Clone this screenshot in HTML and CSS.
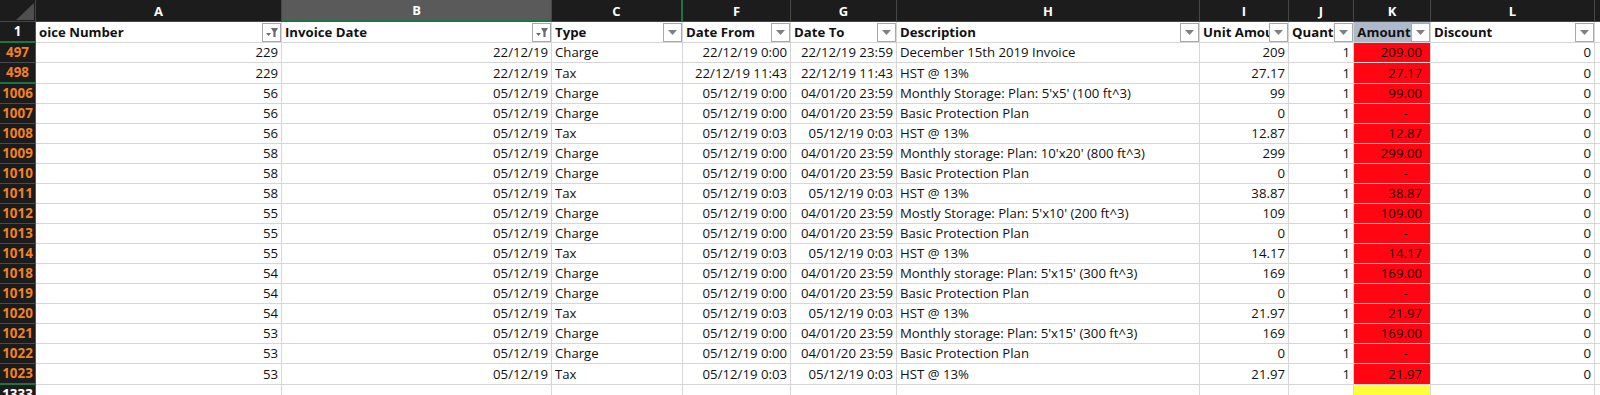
FILE: index.html
```html
<!doctype html>
<html>
 <head>
  <meta charset="utf-8">
  <title>Invoices</title>
  <link rel="stylesheet" href="styles.css">
 </head>
 <body>
  <table class="sheet">
   <colgroup>
    <col class="w-rh"><col class="w-a"><col class="w-b"><col class="w-c"><col class="w-f"><col class="w-g">
    <col class="w-h"><col class="w-i"><col class="w-j"><col class="w-k"><col class="w-l"><col class="w-m">
   </colgroup>
   <thead>
    <tr class="letters">
     <th class="corner"><svg width="22" height="19" viewBox="0 0 22 19"><polygon points="21,1 21,18 3,18" fill="#4f4f4f"/></svg></th>
     <th>A</th><th class="sel">B</th><th class="hidden-after">C</th><th>F</th><th>G</th>
     <th>H</th><th>I</th><th>J</th><th>K</th><th>L</th><th></th>
    </tr>
   </thead>
   <tbody>
    <tr class="fields">
     <th class="rh first mark">1</th>
     <td><div class="fh"><span class="lbl">oice Number</span><span class="flt on"><svg width="17" height="17" viewBox="0 0 17 17"><polygon points="3,9 8,9 5.5,12" fill="#6b6b6b"/><polygon points="8,4 15,4 12.6,8 12.6,13 10.4,13 10.4,8" fill="#6b6b6b"/></svg></span></div></td>
     <td><div class="fh"><span class="lbl">Invoice Date</span><span class="flt on"><svg width="17" height="17" viewBox="0 0 17 17"><polygon points="3,9 8,9 5.5,12" fill="#6b6b6b"/><polygon points="8,4 15,4 12.6,8 12.6,13 10.4,13 10.4,8" fill="#6b6b6b"/></svg></span></div></td>
     <td><div class="fh"><span class="lbl">Type</span><span class="flt"><svg width="17" height="17" viewBox="0 0 17 17"><polygon points="4,6 13,6 8.5,11" fill="#808080"/></svg></span></div></td>
     <td><div class="fh"><span class="lbl">Date From</span><span class="flt"><svg width="17" height="17" viewBox="0 0 17 17"><polygon points="4,6 13,6 8.5,11" fill="#808080"/></svg></span></div></td>
     <td><div class="fh"><span class="lbl">Date To</span><span class="flt"><svg width="17" height="17" viewBox="0 0 17 17"><polygon points="4,6 13,6 8.5,11" fill="#808080"/></svg></span></div></td>
     <td><div class="fh"><span class="lbl">Description</span><span class="flt"><svg width="17" height="17" viewBox="0 0 17 17"><polygon points="4,6 13,6 8.5,11" fill="#808080"/></svg></span></div></td>
     <td><div class="fh"><span class="lbl">Unit Amount</span><span class="flt"><svg width="17" height="17" viewBox="0 0 17 17"><polygon points="4,6 13,6 8.5,11" fill="#808080"/></svg></span></div></td>
     <td><div class="fh"><span class="lbl">Quantity</span><span class="flt"><svg width="17" height="17" viewBox="0 0 17 17"><polygon points="4,6 13,6 8.5,11" fill="#808080"/></svg></span></div></td>
     <td class="amt-head"><div class="fh"><span class="lbl">Amount</span><span class="flt"><svg width="17" height="17" viewBox="0 0 17 17"><polygon points="4,6 13,6 8.5,11" fill="#808080"/></svg></span></div></td>
     <td><div class="fh"><span class="lbl">Discount</span><span class="flt"><svg width="17" height="17" viewBox="0 0 17 17"><polygon points="4,6 13,6 8.5,11" fill="#808080"/></svg></span></div></td>
     <td></td>
    </tr>
    <tr><th class="rh">497</th><td class="n">229</td><td class="n">22/12/19</td><td>Charge</td><td class="n">22/12/19 0:00</td><td class="n">22/12/19 23:59</td><td>December 15th 2019 Invoice</td><td class="n">209</td><td class="n">1</td><td class="amt">209.00</td><td class="n">0</td><td></td></tr>
    <tr><th class="rh mark">498</th><td class="n">229</td><td class="n">22/12/19</td><td>Tax</td><td class="n">22/12/19 11:43</td><td class="n">22/12/19 11:43</td><td>HST @ 13%</td><td class="n">27.17</td><td class="n">1</td><td class="amt">27.17</td><td class="n">0</td><td></td></tr>
    <tr><th class="rh">1006</th><td class="n">56</td><td class="n">05/12/19</td><td>Charge</td><td class="n">05/12/19 0:00</td><td class="n">04/01/20 23:59</td><td>Monthly Storage: Plan: 5'x5' (100 ft^3)</td><td class="n">99</td><td class="n">1</td><td class="amt">99.00</td><td class="n">0</td><td></td></tr>
    <tr><th class="rh">1007</th><td class="n">56</td><td class="n">05/12/19</td><td>Charge</td><td class="n">05/12/19 0:00</td><td class="n">04/01/20 23:59</td><td>Basic Protection Plan</td><td class="n">0</td><td class="n">1</td><td class="amt nil">-</td><td class="n">0</td><td></td></tr>
    <tr><th class="rh">1008</th><td class="n">56</td><td class="n">05/12/19</td><td>Tax</td><td class="n">05/12/19 0:03</td><td class="n">05/12/19 0:03</td><td>HST @ 13%</td><td class="n">12.87</td><td class="n">1</td><td class="amt">12.87</td><td class="n">0</td><td></td></tr>
    <tr><th class="rh">1009</th><td class="n">58</td><td class="n">05/12/19</td><td>Charge</td><td class="n">05/12/19 0:00</td><td class="n">04/01/20 23:59</td><td>Monthly storage: Plan: 10'x20' (800 ft^3)</td><td class="n">299</td><td class="n">1</td><td class="amt">299.00</td><td class="n">0</td><td></td></tr>
    <tr><th class="rh">1010</th><td class="n">58</td><td class="n">05/12/19</td><td>Charge</td><td class="n">05/12/19 0:00</td><td class="n">04/01/20 23:59</td><td>Basic Protection Plan</td><td class="n">0</td><td class="n">1</td><td class="amt nil">-</td><td class="n">0</td><td></td></tr>
    <tr><th class="rh">1011</th><td class="n">58</td><td class="n">05/12/19</td><td>Tax</td><td class="n">05/12/19 0:03</td><td class="n">05/12/19 0:03</td><td>HST @ 13%</td><td class="n">38.87</td><td class="n">1</td><td class="amt">38.87</td><td class="n">0</td><td></td></tr>
    <tr><th class="rh">1012</th><td class="n">55</td><td class="n">05/12/19</td><td>Charge</td><td class="n">05/12/19 0:00</td><td class="n">04/01/20 23:59</td><td>Mostly Storage: Plan: 5'x10' (200 ft^3)</td><td class="n">109</td><td class="n">1</td><td class="amt">109.00</td><td class="n">0</td><td></td></tr>
    <tr><th class="rh">1013</th><td class="n">55</td><td class="n">05/12/19</td><td>Charge</td><td class="n">05/12/19 0:00</td><td class="n">04/01/20 23:59</td><td>Basic Protection Plan</td><td class="n">0</td><td class="n">1</td><td class="amt nil">-</td><td class="n">0</td><td></td></tr>
    <tr><th class="rh">1014</th><td class="n">55</td><td class="n">05/12/19</td><td>Tax</td><td class="n">05/12/19 0:03</td><td class="n">05/12/19 0:03</td><td>HST @ 13%</td><td class="n">14.17</td><td class="n">1</td><td class="amt">14.17</td><td class="n">0</td><td></td></tr>
    <tr><th class="rh">1018</th><td class="n">54</td><td class="n">05/12/19</td><td>Charge</td><td class="n">05/12/19 0:00</td><td class="n">04/01/20 23:59</td><td>Monthly storage: Plan: 5'x15' (300 ft^3)</td><td class="n">169</td><td class="n">1</td><td class="amt">169.00</td><td class="n">0</td><td></td></tr>
    <tr><th class="rh">1019</th><td class="n">54</td><td class="n">05/12/19</td><td>Charge</td><td class="n">05/12/19 0:00</td><td class="n">04/01/20 23:59</td><td>Basic Protection Plan</td><td class="n">0</td><td class="n">1</td><td class="amt nil">-</td><td class="n">0</td><td></td></tr>
    <tr><th class="rh">1020</th><td class="n">54</td><td class="n">05/12/19</td><td>Tax</td><td class="n">05/12/19 0:03</td><td class="n">05/12/19 0:03</td><td>HST @ 13%</td><td class="n">21.97</td><td class="n">1</td><td class="amt">21.97</td><td class="n">0</td><td></td></tr>
    <tr><th class="rh">1021</th><td class="n">53</td><td class="n">05/12/19</td><td>Charge</td><td class="n">05/12/19 0:00</td><td class="n">04/01/20 23:59</td><td>Monthly storage: Plan: 5'x15' (300 ft^3)</td><td class="n">169</td><td class="n">1</td><td class="amt">169.00</td><td class="n">0</td><td></td></tr>
    <tr><th class="rh">1022</th><td class="n">53</td><td class="n">05/12/19</td><td>Charge</td><td class="n">05/12/19 0:00</td><td class="n">04/01/20 23:59</td><td>Basic Protection Plan</td><td class="n">0</td><td class="n">1</td><td class="amt nil">-</td><td class="n">0</td><td></td></tr>
    <tr><th class="rh mark">1023</th><td class="n">53</td><td class="n">05/12/19</td><td>Tax</td><td class="n">05/12/19 0:03</td><td class="n">05/12/19 0:03</td><td>HST @ 13%</td><td class="n">21.97</td><td class="n">1</td><td class="amt">21.97</td><td class="n">0</td><td></td></tr>
    <tr><th class="rh first">1333</th><td></td><td></td><td></td><td></td><td></td><td></td><td></td><td></td><td class="total"></td><td></td><td></td></tr>
   </tbody>
  </table>
 </body>
</html>
```

FILE: styles.css
```css
html, body { margin: 0; background: #fff; overflow: hidden; }

.sheet { border-collapse: separate; border-spacing: 0; table-layout: fixed; width: 1695px; font-family: "Open Sans", sans-serif; font-size: 13.2px; color: #111; }
.w-rh { width: 36px; }
.w-a { width: 246px; }
.w-b { width: 270px; }
.w-c { width: 131px; }
.w-f { width: 108px; }
.w-g { width: 106px; }
.w-h { width: 303px; }
.w-i { width: 89px; }
.w-j { width: 65px; }
.w-k { width: 77px; }
.w-l { width: 164px; }
.w-m { width: 100px; }

/* column letters */
.letters th { height: 21px; padding: 0; background: #1c1c1c; color: #fff; font-size: 13px; font-weight: 700; text-align: center; border-right: 1px solid #474747; border-bottom: 1px solid #474747; }
.letters th.sel { background: #5a5a5a; height: 20px; border-bottom: 2px solid #1f7244; }
.letters th.hidden-after { border-right: 2px solid #1f7244; }
.letters th.corner { text-align: right; vertical-align: bottom; line-height: 0; }

/* row numbers */
.rh { height: 19px; padding: 0; background: #1c1c1c; color: #f2821f; font-size: 13.4px; font-weight: 700; text-align: center; border-right: 1px solid #555; border-bottom: 1px solid #4a4a4a; line-height: 19px; }
.rh.first { color: #fff; }
.rh.mark { height: 18px; border-bottom: 2px solid #1f7244; }

td { height: 19px; padding: 0 3px; border-right: 1px solid #d6d6d6; border-bottom: 1px solid #d6d6d6; white-space: nowrap; overflow: hidden; line-height: 19px; }
td.n { text-align: right; }
td.amt { background: #ff0612; text-align: right; padding-right: 8px; color: #1a0000; }
td.amt.nil { padding-right: 22px; }
td.total { background: #ffff3a; }

/* header row with filter buttons */
.fields td { height: 20px; padding: 0 0 0 3px; font-weight: 700; line-height: 20px; }
.fh { display: flex; align-items: center; }
.lbl { flex: 1; overflow: hidden; white-space: nowrap; }
.flt { flex: none; display: flex; width: 17px; height: 17px; border: 1px solid #a9a9a9; background: #fff; }
td.amt-head { background: #aeb9ca; }
td.amt-head .lbl { text-align: center; }
```
